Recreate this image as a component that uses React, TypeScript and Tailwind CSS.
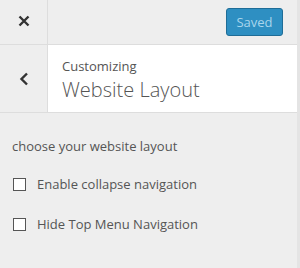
import { useState } from 'react'

export default function App() {
    const [collapse, setCollapse] = useState(false)
    const [hideTop, setHideTop] = useState(false)

    return (
        <div
            className="w-[300px] h-[268px] bg-[#eeeeee] text-[#555555] border-r-[3px] border-[#e4e4e4] overflow-hidden"
            style={{ fontFamily: '"Open Sans", "Noto Sans", sans-serif' }}
        >
            {/* Header */}
            <div className="flex h-[45px] border-b border-[#dddddd]">
                <button className="w-[48px] flex items-center justify-center border-r border-[#dddddd] pb-[2px]">
                    <svg width="12" height="12" viewBox="0 0 12 12">
                        <path d="M1.5 1.5 L10.5 10.5 M10.5 1.5 L1.5 10.5" stroke="#333" strokeWidth="2.4" />
                    </svg>
                </button>
                <div className="flex-1 flex items-center justify-end pr-[14px]">
                    <button className="w-[57px] h-[28px] rounded-[3px] bg-[#2e8fc2] border border-[#1f6d97] text-[#a9d5ec] text-[13px] leading-none">
                        Saved
                    </button>
                </div>
            </div>

            {/* Section title */}
            <div className="flex h-[68px] border-b border-[#dddddd]">
                <button className="w-[48px] flex items-center justify-center border-r border-[#dddddd]">
                    <svg width="10" height="14" viewBox="0 0 10 14">
                        <path d="M8 1.5 L2.5 7 L8 12.5" stroke="#333" strokeWidth="2.4" fill="none" />
                    </svg>
                </button>
                <div className="flex-1 bg-white pl-[14px] pt-[12px]">
                    <div className="text-[13px] leading-[18px]">Customizing</div>
                    <div className="text-[20px] leading-[28px] font-light mt-[1px]">Website Layout</div>
                </div>
            </div>

            {/* Controls */}
            <div className="px-[12px] pt-[24px] text-[13px]">
                <p className="leading-[18px]">choose your website layout</p>
                <label className="flex items-center gap-[11px] mt-[20px] ml-[1px]">
                    <input
                        type="checkbox"
                        checked={collapse}
                        onChange={(e) => setCollapse(e.target.checked)}
                        className="appearance-none w-[13px] h-[13px] border border-[#555] bg-white m-0"
                    />
                    <span className="leading-[18px]">Enable collapse navigation</span>
                </label>
                <label className="flex items-center gap-[11px] mt-[22px] ml-[1px]">
                    <input
                        type="checkbox"
                        checked={hideTop}
                        onChange={(e) => setHideTop(e.target.checked)}
                        className="appearance-none w-[13px] h-[13px] border border-[#555] bg-white m-0"
                    />
                    <span className="leading-[18px]">Hide Top Menu Navigation</span>
                </label>
            </div>
        </div>
    )
}
